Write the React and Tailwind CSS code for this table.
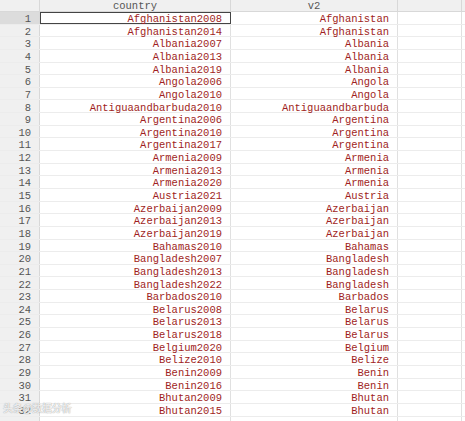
import React from 'react';

const rows = [
  ['Afghanistan2008', 'Afghanistan'],
  ['Afghanistan2014', 'Afghanistan'],
  ['Albania2007', 'Albania'],
  ['Albania2013', 'Albania'],
  ['Albania2019', 'Albania'],
  ['Angola2006', 'Angola'],
  ['Angola2010', 'Angola'],
  ['Antiguaandbarbuda2010', 'Antiguaandbarbuda'],
  ['Argentina2006', 'Argentina'],
  ['Argentina2010', 'Argentina'],
  ['Argentina2017', 'Argentina'],
  ['Armenia2009', 'Armenia'],
  ['Armenia2013', 'Armenia'],
  ['Armenia2020', 'Armenia'],
  ['Austria2021', 'Austria'],
  ['Azerbaijan2009', 'Azerbaijan'],
  ['Azerbaijan2013', 'Azerbaijan'],
  ['Azerbaijan2019', 'Azerbaijan'],
  ['Bahamas2010', 'Bahamas'],
  ['Bangladesh2007', 'Bangladesh'],
  ['Bangladesh2013', 'Bangladesh'],
  ['Bangladesh2022', 'Bangladesh'],
  ['Barbados2010', 'Barbados'],
  ['Belarus2008', 'Belarus'],
  ['Belarus2013', 'Belarus'],
  ['Belarus2018', 'Belarus'],
  ['Belgium2020', 'Belgium'],
  ['Belize2010', 'Belize'],
  ['Benin2009', 'Benin'],
  ['Benin2016', 'Benin'],
  ['Bhutan2009', 'Bhutan'],
  ['Bhutan2015', 'Bhutan'],
];

export default function App() {
  return (
    <div
      className="relative w-[465px] h-[421px] overflow-hidden bg-white text-[10.5px] leading-none"
      style={{ fontFamily: '"Liberation Mono", "DejaVu Sans Mono", monospace' }}
    >
      {/* header */}
      <div className="flex h-[12px] bg-[#f0f0f0] border-b border-[#d8d8d8] text-[#555]">
        <div className="w-[40px] border-r border-[#d8d8d8]" />
        <div className="w-[191px] flex items-center justify-center pt-[2px] border-r border-[#d8d8d8]">country</div>
        <div className="w-[167px] flex items-center justify-center pt-[2px] border-r border-[#d8d8d8]">v2</div>
        <div className="w-[64px] border-r border-[#d8d8d8]" />
        <div className="flex-1" />
      </div>

      {rows.map(([c, v], i) => (
        <div key={i} className="flex h-[12.65px] border-b border-[#ececec]">
          <div
            className={
              'w-[40px] flex items-center justify-end pr-[8px] pt-[3px] border-r border-[#d8d8d8] text-[#555] ' +
              (i === 0 ? 'bg-[#dcdcdc]' : 'bg-[#f0f0f0]')
            }
          >
            {i + 1}
          </div>
          <div
            className={
              'w-[191px] flex items-center justify-end pr-[8px] pt-[3px] text-[#a01e22] ' +
              (i === 0 ? 'border border-[#444]' : 'border-r border-[#e0e0e0]')
            }
          >
            {c}
          </div>
          <div className="w-[167px] flex items-center justify-end pr-[8px] pt-[3px] border-r border-[#e0e0e0] text-[#a01e22]">
            {v}
          </div>
          <div className="w-[64px] border-r border-[#e0e0e0]" />
          <div className="flex-1" />
        </div>
      ))}

      {/* empty partial row at the bottom */}
      <div className="flex h-[12.65px]">
        <div className="w-[40px] bg-[#f0f0f0] border-r border-[#d8d8d8]" />
        <div className="w-[191px] border-r border-[#e0e0e0]" />
        <div className="w-[167px] border-r border-[#e0e0e0]" />
        <div className="w-[64px] border-r border-[#e0e0e0]" />
      </div>

      {/* watermark */}
      <div
        className="absolute left-[3px] top-[403px] text-[10px] text-white/80 font-bold tracking-tight"
        style={{ fontFamily: '"Noto Sans CJK SC", sans-serif', textShadow: '0 0 1px #888' }}
      >
        头条@数据分析
      </div>
    </div>
  );
}
